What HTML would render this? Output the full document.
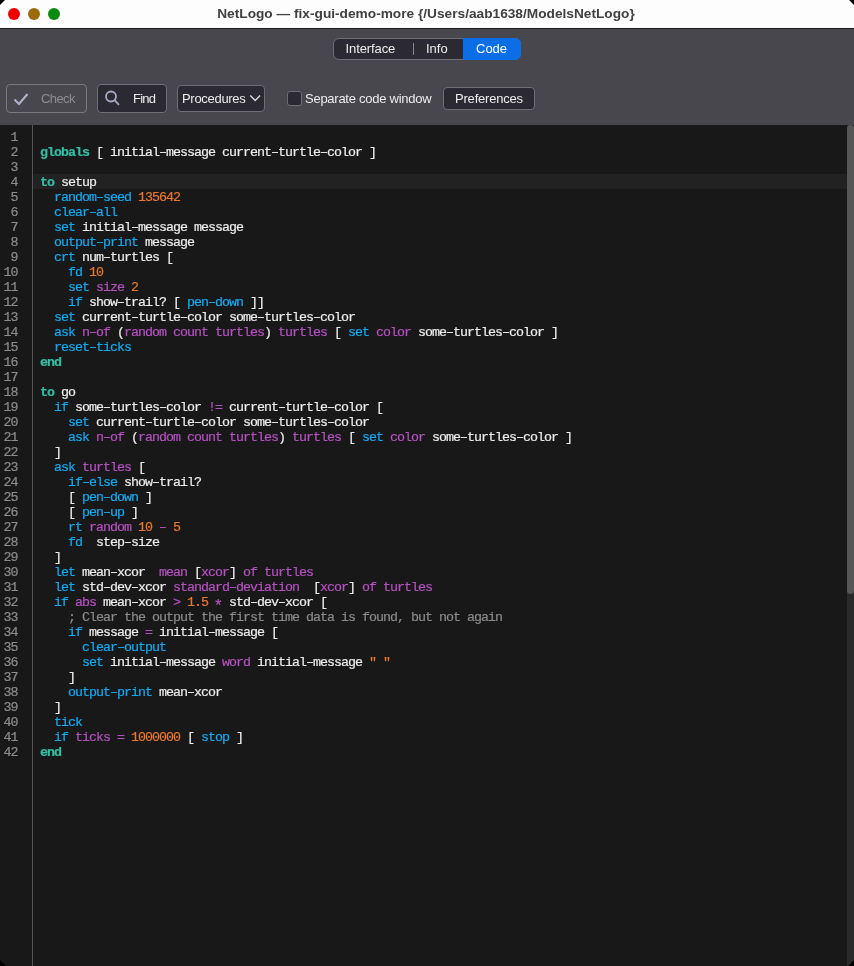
<!DOCTYPE html>
<html><head><meta charset="utf-8">
<style>
html,body{margin:0;padding:0;}
body{width:854px;height:966px;overflow:hidden;position:relative;background:#181818;font-family:"Liberation Sans",sans-serif;}
.abs{position:absolute;}
#title{left:0;top:0;width:854px;height:28px;background:#fdfdfd;}
#titleline{left:0;top:28px;width:854px;height:1px;background:#1a1a1a;}
#titletext{left:-1px;top:0;width:854px;height:28px;line-height:28px;text-align:center;font-weight:bold;font-size:13.7px;color:#404040;transform:translateZ(0);}
.tl{width:12px;height:12px;border-radius:50%;top:8px;}
#toolbar{left:0;top:29px;width:854px;height:96px;background:#48474d;}
.btn{box-sizing:border-box;border:1px solid #6f6e73;border-radius:4px;background:#2b2a32;color:#ececec;font-size:13px;}
.lbl{position:absolute;white-space:nowrap;transform:translateZ(0);}
#code{left:0;top:125px;width:847px;height:841px;background:#181818;}
#hl{left:33px;top:174px;width:814px;height:15px;background:#222222;}
#sep{left:32px;top:125px;width:1px;height:841px;background:#555555;}
#nums{left:0;top:130px;width:17.5px;text-align:right;}
pre{margin:0;transform:translateZ(0);-webkit-text-stroke:0.2px currentColor;font-family:"Liberation Mono",monospace;font-size:13.33px;letter-spacing:-1px;line-height:15px;}
#nums{color:#8c8c8c;}
#src{left:40px;top:130px;color:#ececec;}
.k{color:#35bfa4;font-weight:bold;}
.c{color:#14aaf2;}
.r{color:#b551c1;}
.n{color:#e8782f;}
.m{color:#8a8a8a;}
.ast{font-size:16px;letter-spacing:-2.6px;position:relative;top:5px;left:-1.5px;line-height:0;}
#sbtrack{left:847px;top:125px;width:7px;height:841px;background:#2a2a2a;}
#sbthumb{left:847px;top:125px;width:7px;height:469px;background:#565656;border-radius:3.5px;}
</style></head><body>
<div id="title" class="abs"></div>
<div id="titletext" class="abs">NetLogo — fix-gui-demo-more {/Users/aab1638/ModelsNetLogo}</div>
<div id="titleline" class="abs"></div>
<div class="abs tl" style="left:8px;background:#ee0000;"></div>
<div class="abs tl" style="left:28px;background:#9b6a0c;"></div>
<div class="abs tl" style="left:48px;background:#0a8a10;"></div>

<div id="toolbar" class="abs"></div>
<!-- tabs -->
<div class="abs btn" style="left:333px;top:38px;width:188px;height:22px;border-radius:6px;"></div>
<div class="abs" style="left:463px;top:38px;width:58px;height:22px;background:#0a6ee6;border-radius:0 6px 6px 0;"></div>
<div class="abs" style="left:413px;top:43px;width:1px;height:12px;background:#8a8a8e;"></div>
<div class="lbl" style="left:345.5px;top:41px;font-size:13px;color:#ececec;letter-spacing:-0.1px;">Interface</div>
<div class="lbl" style="left:426px;top:41px;font-size:13px;color:#ececec;">Info</div>
<div class="lbl" style="left:476px;top:41px;font-size:13px;color:#ffffff;">Code</div>

<!-- buttons -->
<div class="abs btn" style="left:6px;top:84px;width:81px;height:29px;background:transparent;border-color:#7a797e;"></div>
<svg class="abs" style="left:0;top:78px" width="40" height="40"><path d="M14.5 21.5 L19 26 L27.5 16" stroke="#b3b3cf" stroke-width="2" fill="none"/></svg>
<div class="lbl" style="left:41px;top:91px;color:#8d8c91;font-size:13px;letter-spacing:-0.6px;">Check</div>

<div class="abs btn" style="left:97px;top:84px;width:70px;height:29px;"></div>
<svg class="abs" style="left:90px;top:78px" width="40" height="40"><circle cx="21" cy="18.5" r="5" stroke="#a9a8c6" stroke-width="1.8" fill="none"/><path d="M24.6 22.2 L29 26.8" stroke="#a9a8c6" stroke-width="1.8"/></svg>
<div class="lbl" style="left:133px;top:91px;color:#ececec;font-size:13px;letter-spacing:-0.75px;">Find</div>

<div class="abs btn" style="left:177px;top:85px;width:88px;height:27px;"></div>
<div class="lbl" style="left:182px;top:91px;color:#ececec;font-size:13px;letter-spacing:-0.3px;">Procedures</div>
<svg class="abs" style="left:248px;top:92px" width="14" height="12"><path d="M2.3 3.5 L7.2 8.5 L12.1 3.5" stroke="#dedede" stroke-width="1.3" fill="none"/></svg>

<div class="abs btn" style="left:287px;top:91px;width:15px;height:15px;border-radius:3px;"></div>
<div class="lbl" style="left:305px;top:91px;color:#ececec;font-size:13px;letter-spacing:-0.26px;">Separate code window</div>

<div class="abs btn" style="left:443px;top:87px;width:92px;height:23px;"></div>
<div class="lbl" style="left:455px;top:91px;color:#ececec;font-size:13px;letter-spacing:-0.2px;">Preferences</div>

<!-- code -->
<div id="code" class="abs"></div>
<div id="hl" class="abs"></div>
<div id="sep" class="abs"></div>
<pre id="nums" class="abs">
1
2
3
4
5
6
7
8
9
10
11
12
13
14
15
16
17
18
19
20
21
22
23
24
25
26
27
28
29
30
31
32
33
34
35
36
37
38
39
40
41
42</pre>
<pre id="src" class="abs">

<span class="k">globals</span> [ initial–message current–turtle–color ]

<span class="k">to</span> setup
  <span class="c">random–seed</span> <span class="n">135642</span>
  <span class="c">clear–all</span>
  <span class="c">set</span> initial–message message
  <span class="c">output–print</span> message
  <span class="c">crt</span> num–turtles [
    <span class="c">fd</span> <span class="n">10</span>
    <span class="c">set</span> <span class="r">size</span> <span class="n">2</span>
    <span class="c">if</span> show–trail? [ <span class="c">pen–down</span> ]]
  <span class="c">set</span> current–turtle–color some–turtles–color
  <span class="c">ask</span> <span class="r">n–of</span> (<span class="r">random</span> <span class="r">count</span> <span class="r">turtles</span>) <span class="r">turtles</span> [ <span class="c">set</span> <span class="r">color</span> some–turtles–color ]
  <span class="c">reset–ticks</span>
<span class="k">end</span>

<span class="k">to</span> go
  <span class="c">if</span> some–turtles–color <span class="r">!=</span> current–turtle–color [
    <span class="c">set</span> current–turtle–color some–turtles–color
    <span class="c">ask</span> <span class="r">n–of</span> (<span class="r">random</span> <span class="r">count</span> <span class="r">turtles</span>) <span class="r">turtles</span> [ <span class="c">set</span> <span class="r">color</span> some–turtles–color ]
  ]
  <span class="c">ask</span> <span class="r">turtles</span> [
    <span class="c">if–else</span> show–trail?
    [ <span class="c">pen–down</span> ]
    [ <span class="c">pen–up</span> ]
    <span class="c">rt</span> <span class="r">random</span> <span class="n">10</span> <span class="r">–</span> <span class="n">5</span>
    <span class="c">fd</span>  step–size
  ]
  <span class="c">let</span> mean–xcor  <span class="r">mean</span> [<span class="r">xcor</span>] <span class="r">of</span> <span class="r">turtles</span>
  <span class="c">let</span> std–dev–xcor <span class="r">standard–deviation</span>  [<span class="r">xcor</span>] <span class="r">of</span> <span class="r">turtles</span>
  <span class="c">if</span> <span class="r">abs</span> mean–xcor <span class="r">&gt;</span> <span class="n">1.5</span> <span class="r"><span class="ast">*</span></span> std–dev–xcor [
    <span class="m">; Clear the output the first time data is found, but not again</span>
    <span class="c">if</span> message <span class="r">=</span> initial–message [
      <span class="c">clear–output</span>
      <span class="c">set</span> initial–message <span class="r">word</span> initial–message <span class="n">" "</span>
    ]
    <span class="c">output–print</span> mean–xcor
  ]
  <span class="c">tick</span>
  <span class="c">if</span> <span class="r">ticks</span> <span class="r">=</span> <span class="n">1000000</span> [ <span class="c">stop</span> ]
<span class="k">end</span></pre>
<div id="sbtrack" class="abs"></div>
<div id="sbthumb" class="abs"></div>

<svg class="abs" style="left:0;top:0" width="854" height="966">
<path d="M0 0 L5 0 L0 5 Z" fill="#000"/>
<path d="M854 0 L849 0 L854 5 Z" fill="#000"/>
<path d="M0 966 L0 960 L6 966 Z" fill="#000"/>
<path d="M854 966 L854 960 L848 966 Z" fill="#000"/>
</svg>
</body></html>
